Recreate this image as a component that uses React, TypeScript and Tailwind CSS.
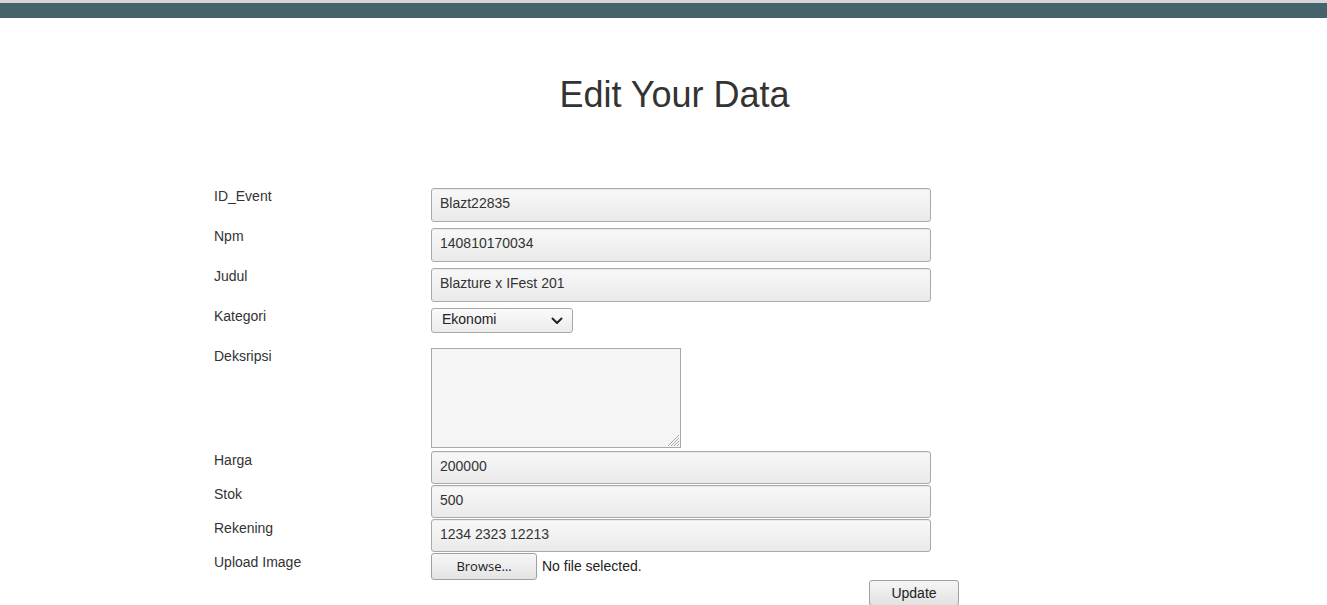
import React from 'react';

const font = { fontFamily: '"Liberation Sans", Arial, sans-serif' };

const Label = ({ children, pt = '' }: { children: React.ReactNode; pt?: string }) => (
  <div className={`w-[217px] shrink-0 text-[14px] leading-[16px] text-[#333] ${pt}`}>{children}</div>
);

const TextBox = ({ value, h = 'h-[34px]' }: { value: string; h?: string }) => (
  <div
    className={`${h} w-[500px] flex items-center pl-[8px] pb-[3px] rounded-[3px] border border-[#a9a9a9] bg-linear-to-b from-[#f8f8f8] to-[#eaeaea] text-[14px] text-[#333] shadow-[inset_0_1px_1px_rgba(0,0,0,0.06)]`}
  >
    {value}
  </div>
);

export default function App() {
  return (
    <div className="min-h-[605px] bg-white" style={font}>
      {/* top bar */}
      <div className="h-[3px] bg-[#d5d5d5]" />
      <div className="h-[15px] bg-[#44636b]" />

      <h1 className="mt-[57px] pl-[22px] text-center text-[36px] leading-[40px] font-normal text-[#333]">
        Edit Your Data
      </h1>

      <form className="mt-[73px] pl-[214px]" onSubmit={(e) => e.preventDefault()}>
        <div className="flex mb-[6px]">
          <Label>ID_Event</Label>
          <TextBox value="Blazt22835" />
        </div>
        <div className="flex mb-[6px]">
          <Label>Npm</Label>
          <TextBox value="140810170034" />
        </div>
        <div className="flex mb-[6px]">
          <Label>Judul</Label>
          <TextBox value="Blazture x IFest 201" />
        </div>
        <div className="flex mb-[15px]">
          <Label>Kategori</Label>
          <div className="h-[25px] w-[142px] flex items-center justify-between pl-[10px] pr-[9px] rounded-[3px] border border-[#a9a9a9] bg-linear-to-b from-[#fafafa] to-[#ececec] text-[14px] text-[#222]">
            <span className="pb-[2px]">Ekonomi</span>
            <svg width="12" height="8" viewBox="0 0 12 8" fill="none">
              <path d="M1.5 1.5 L6 6 L10.5 1.5" stroke="#222" strokeWidth="2" strokeLinecap="round" strokeLinejoin="round" />
            </svg>
          </div>
        </div>
        <div className="flex mb-[3px]">
          <Label>Deksripsi</Label>
          <div className="relative h-[100px] w-[250px] border border-[#a9a9a9] bg-[#f5f5f5]">
            <svg className="absolute right-0 bottom-0" width="14" height="14" viewBox="0 0 14 14">
              <path d="M13 2 L2 13 M13 5 L5 13 M13 8 L8 13 M13 11 L11 13" stroke="#a8a8a8" strokeWidth="1" />
            </svg>
          </div>
        </div>
        <div className="flex mb-[1px]">
          <Label pt="pt-[1px]">Harga</Label>
          <TextBox value="200000" h="h-[33px]" />
        </div>
        <div className="flex mb-[1px]">
          <Label pt="pt-[1px]">Stok</Label>
          <TextBox value="500" h="h-[33px]" />
        </div>
        <div className="flex mb-[1px]">
          <Label pt="pt-[1px]">Rekening</Label>
          <TextBox value="1234 2323 12213" h="h-[33px]" />
        </div>
        <div className="flex">
          <Label pt="pt-[1px]">Upload Image</Label>
          <div className="flex items-center">
            <div
              className="h-[27px] w-[106px] flex items-center justify-center rounded-[3px] border border-[#a0a0a0] bg-linear-to-b from-[#f6f6f6] to-[#e4e4e4] text-[13px] text-[#222]"
              style={{ fontFamily: '"Open Sans", "DejaVu Sans", sans-serif' }}
            >
              Browse…
            </div>
            <span className="ml-[5px] text-[14px] text-[#222]">No file selected.</span>
          </div>
        </div>
        <div className="pl-[655px]">
          <button
            type="submit"
            className="h-[26px] w-[90px] rounded-[3px] border border-[#a0a0a0] bg-linear-to-b from-[#f6f6f6] to-[#e2e2e2] text-[14px] text-[#222]"
          >
            Update
          </button>
        </div>
      </form>
    </div>
  );
}
